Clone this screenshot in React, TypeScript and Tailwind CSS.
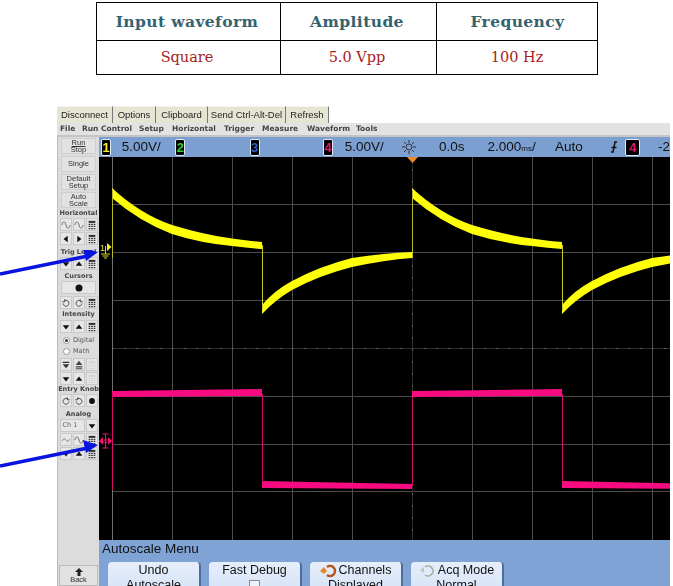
import type { ReactNode } from "react";

type GlyphName =
  | "down"
  | "up"
  | "left"
  | "right"
  | "calc"
  | "calcOff"
  | "waveSmall"
  | "wave"
  | "ccw"
  | "cw"
  | "dot"
  | "fastDown"
  | "fastUp";

function Glyph({ name }: { name: GlyphName }) {
  return (
    <svg width="12" height="12" viewBox="0 0 12 12">
      {name === "down" && <path d="M2 4h8L6 9z" fill="#111" />}
      {name === "up" && <path d="M2 8h8L6 3z" fill="#111" />}
      {name === "left" && <path d="M8 2v8L3 6z" fill="#111" />}
      {name === "right" && <path d="M4 2v8l5-4z" fill="#111" />}
      {name === "fastDown" && <path d="M2 2h8v1.500H2zM2 5h8L6 10z" fill="#333" />}
      {name === "fastUp" && <path d="M6 1l4 5H2zM2 7.500h8V9H2zM2 10h8v1H2z" fill="#444" />}
      {(name === "calc" || name === "calcOff") && (
        <g fill={name === "calc" ? "#333" : "#d4d4d4"}>
          <path d="M2 1h8v2.500H2z" />
          <path d="M2 4.500h2v1.500H2zM5 4.500h2v1.500H5zM8 4.500h2v1.500H8zM2 7h2v1.500H2zM5 7h2v1.500H5zM8 7h2v1.500H8zM2 9.500h2V11H2zM5 9.500h2V11H5zM8 9.500h2V11H8z" />
        </g>
      )}
      {name === "waveSmall" && <path d="M1.500 7c1.500-3 3-3 4.500-1s3 2 4.500-1" fill="none" stroke="#666" />}
      {name === "wave" && <path d="M1 6c1-5 4-5 5 0s4 5 5 0" fill="none" stroke="#555" />}
      {name === "ccw" && <path d="M4 3.500a3.500 3.500 0 1 1-1.500 3M4.500 1.500v3h-3" fill="none" stroke="#333" />}
      {name === "cw" && <path d="M8 3.500a3.500 3.500 0 1 0 1.500 3M7.500 1.500v3h3" fill="none" stroke="#333" />}
      {name === "dot" && <circle cx="6" cy="6" r="3.500" fill="#111" />}
    </svg>
  );
}

function IconRow({ icons, gapTop = "" }: { icons: GlyphName[]; gapTop?: string }) {
  return (
    <div className={`flex justify-center gap-px ${gapTop}`}>
      {icons.map((name, i) => (
        <div
          key={i}
          className="flex h-[13px] w-[12px] items-center justify-center border border-[#c9c9c9] bg-[#e6e6e6]"
        >
          <Glyph name={name} />
        </div>
      ))}
    </div>
  );
}

function SideButton({ children, h = "h-[16px]" }: { children: ReactNode; h?: string }) {
  return (
    <div
      className={`mx-[3px] flex ${h} flex-col items-center justify-center border border-[#cfcfcf] bg-[#e2e2e2] text-[7.5px] leading-[7.5px] text-[#333]`}
    >
      {children}
    </div>
  );
}

function SideLabel({ text, className = "" }: { text: string; className?: string }) {
  return (
    <div className={`text-center font-['DejaVu_Sans',sans-serif] text-[6.5px] font-bold leading-[9px] text-[#444] ${className}`}>
      {text}
    </div>
  );
}

function Radio({ label, on }: { label: string; on?: boolean }) {
  return (
    <div className="flex h-[11px] items-center gap-[3px] pl-[5px] font-['DejaVu_Sans',sans-serif] text-[6.5px] text-[#555]">
      <span className="flex h-[7px] w-[7px] items-center justify-center rounded-full border border-[#999] bg-white">
        {on && <span className="h-[3px] w-[3px] rounded-full bg-[#333]" />}
      </span>
      {label}
    </div>
  );
}

function SidePanel() {
  return (
    <div className="flex h-[449px] w-[42px] shrink-0 flex-col overflow-hidden border-l border-[#bbb] bg-[#dcdcdc] pt-px font-['Liberation_Sans',sans-serif]">
      <SideButton>
        <span className="underline">Run</span>
        <span>Stop</span>
      </SideButton>
      <SideButton h="h-[16px] mt-[2px]">Single</SideButton>
      <SideButton h="h-[16px] mt-[2px]">
        <span>Default</span>
        <span>Setup</span>
      </SideButton>
      <SideButton h="h-[16px] mt-[2px]">
        <span>Auto</span>
        <span>Scale</span>
      </SideButton>
      <SideLabel text="Horizontal" className="mt-[1px]" />
      <IconRow icons={["wave", "wave", "calc"]} />
      <IconRow icons={["left", "right", "calc"]} gapTop="mt-px" />
      <SideLabel text="Trig Level" className="mt-[3px]" />
      <IconRow icons={["down", "up", "calc"]} />
      <SideLabel text="Cursors" className="mt-[2px]" />
      <div className="mx-[3px] flex h-[13px] items-center justify-center border border-[#c9c9c9] bg-[#e6e6e6]">
        <Glyph name="dot" />
      </div>
      <IconRow icons={["ccw", "cw", "calc"]} gapTop="mt-[2px]" />
      <SideLabel text="Intensity" className="mt-[1px]" />
      <IconRow icons={["down", "up", "calc"]} gapTop="mt-px" />
      <div className="mt-[2px]">
        <Radio label="Digital" on />
        <Radio label="Math" />
      </div>
      <IconRow icons={["fastDown", "fastUp", "calcOff"]} gapTop="mt-[1px]" />
      <IconRow icons={["down", "up", "calcOff"]} gapTop="mt-[1px]" />
      <SideLabel text="Entry Knob" />
      <IconRow icons={["cw", "ccw", "dot"]} />
      <SideLabel text="Analog" className="mt-[3px]" />
      <div className="flex justify-center gap-px">
        <div className="flex h-[13px] w-[25px] items-center border border-[#c9c9c9] bg-[#e6e6e6] pl-[2px] font-['DejaVu_Sans',sans-serif] text-[6.5px] text-[#666]">
          Ch 1
        </div>
        <div className="flex h-[13px] w-[12px] items-center justify-center border border-[#c9c9c9] bg-[#e6e6e6]">
          <Glyph name="down" />
        </div>
      </div>
      <IconRow icons={["waveSmall", "wave", "calc"]} gapTop="mt-px" />
      <IconRow icons={["down", "up", "calc"]} gapTop="mt-px" />
      <div className="mt-auto mx-[1px] flex h-[21px] flex-col items-center justify-center border border-[#bbb] bg-[#e2e2e2] text-[7.5px] leading-[7px] text-[#333]">
        <svg width="10" height="8" viewBox="0 0 10 8">
          <path d="M5 0l4 4H6.500v4h-3V4H1z" fill="#222" />
        </svg>
        Back
      </div>
    </div>
  );
}

function ChannelBadge({ n, color, w = "w-[10px]" }: { n: number; color: string; w?: string }) {
  return (
    <span
      className={`flex h-[17px] ${w} items-center justify-center rounded-[2px] border border-[#dfe8f5] bg-black text-[13px] font-bold leading-none ${color}`}
    >
      {n}
    </span>
  );
}

function ChannelBar() {
  return (
    <div className="flex h-[20px] items-center overflow-hidden whitespace-nowrap bg-[#7b9fd1] text-[13.500px] leading-none text-[#111]">
      <div className="ml-[2px] w-[21px]"><ChannelBadge n={1} color="text-[#f2ee30]" /></div>
      <div className="w-[54px]">5.00V/</div>
      <div className="w-[75px]"><ChannelBadge n={2} color="text-[#35d435]" /></div>
      <div className="w-[74px]"><ChannelBadge n={3} color="text-[#2a62c8]" /></div>
      <div className="w-[22px]"><ChannelBadge n={4} color="text-[#e0186c]" /></div>
      <div className="w-[57px]">5.00V/</div>
      <div className="w-[38px]">
        <svg width="16" height="16" viewBox="0 0 16 16" stroke="#333" fill="none">
          <circle cx="8" cy="8" r="3" />
          <path d="M8 1v3M8 12v3M1 8h3M12 8h3M3 3l2 2M11 11l2 2M13 3l-2 2M5 11l-2 2" />
        </svg>
      </div>
      <div className="w-[49px]">0.0s</div>
      <div className="w-[68px]">
        2.000<span className="text-[8px]">ms</span>/
      </div>
      <div className="w-[49px]">Auto</div>
      <div className="flex w-[22px] justify-center">
        <svg width="10" height="14" viewBox="0 0 10 14" fill="none" stroke="#111" strokeWidth="1.500">
          <path d="M8 2H6L4 12H2M2.500 7.500h5" />
        </svg>
      </div>
      <div className="w-[33px]"><ChannelBadge n={4} color="text-[#e0186c]" w="w-[15px]" /></div>
      <div>-2</div>
    </div>
  );
}

function ScopeScreen() {
  const verticals = [172, 232, 292, 352, 472, 532, 592, 652];
  const horizontals = [204, 252, 300, 396, 444, 491];
  return (
    <svg width="571" height="383" viewBox="99 157 571 383" className="block">
      <rect x="99" y="157" width="571" height="383" fill="#000" />
      {verticals.map((x) => (
        <line key={x} x1={x + 0.5} y1="157" x2={x + 0.5} y2="540" stroke="#4c4c4c" />
      ))}
      {horizontals.map((y) => (
        <line key={y} x1="112" y1={y + 0.5} x2="670" y2={y + 0.5} stroke="#4c4c4c" />
      ))}
      <line x1="112" y1="348.500" x2="670" y2="348.500" stroke="#2c2c2c" />
      <line x1="112" y1="348.500" x2="670" y2="348.500" stroke="#5e5e5e" strokeDasharray="2 10" />
      <line x1="412.500" y1="157" x2="412.500" y2="540" stroke="#2c2c2c" />
      <line x1="412.500" y1="157" x2="412.500" y2="540" stroke="#5e5e5e" strokeDasharray="2 10" />
      <line x1="112.500" y1="157" x2="112.500" y2="540" stroke="#707070" />
      <path d="M407 157h11l-5.500 6z" fill="#f08a24" />

      {/* yellow channel, one period drawn twice */}
      {[0, 300].map((dx) => (
        <g key={dx} transform={`translate(${dx} 0)`}>
          <path
            d="M112 188Q140 214 172 225Q205 235 232 238.500Q248 241 262 242L262 249Q248 248 232 246Q200 243 172 234Q140 222 112 198Z"
            fill="#ffff08"
          />
          <path
            d="M262 305Q275 290 292 281Q320 266 352 258Q385 253 412 252L412 258Q385 260 352 267Q320 275 292 290Q275 300 262 314Z"
            fill="#ffff08"
          />
          <path d="M262.500 245V310" stroke="#c8c820" fill="none" />
          <path d="M112.500 190V258" stroke="#b8b820" fill="none" />
        </g>
      ))}

      {/* pink channel */}
      {[0, 300].map((dx) => (
        <g key={dx} transform={`translate(${dx} 0)`}>
          <path d="M112 391L262 389V396L112 397Z" fill="#f80a80" />
          <path d="M262 481L412 484V489L262 488Z" fill="#f80a80" />
          <path d="M262.500 394V484" stroke="#d0106c" fill="none" />
          <path d="M412.500 394V486" stroke="#d0106c" fill="none" />
        </g>
      ))}
      <path d="M112.500 394V490" stroke="#d0106c" fill="none" />

      <g stroke="#d8d430" fill="none">
        <path d="M105.500 246V254M101 254h9M102.500 256h6M104 258h3" />
      </g>
      <text x="100" y="251" fontSize="9" fill="#e8e440" fontFamily="Liberation Sans, sans-serif">1</text>
      <path d="M107 243l4.500 4-4.500 4z" fill="#f2ee30" />

      <g stroke="#f0116e" fill="none">
        <path d="M105.500 434V448M102.500 434h6M102.500 448h6" />
      </g>
      <text x="102.500" y="444" fontSize="9" fill="#f0116e" fontFamily="Liberation Sans, sans-serif">4</text>
      <path d="M108 437l4 4-4 4zM103 437l-4 4 4 4z" fill="#f0116e" />
    </svg>
  );
}

function MenuKey({ top, bottom, icon }: { top: string; bottom?: string; icon?: ReactNode }) {
  return (
    <div className="flex h-[40px] w-[93px] shrink-0 flex-col items-center rounded-t-[4px] border-r-2 border-[#4e6d9c] bg-gradient-to-b from-[#e6eefb] to-[#d0dff6] pt-[1px] text-[12.500px] leading-[15px] text-[#111]">
      <div className="flex items-center gap-[1px] whitespace-nowrap">
        {icon}
        {top}
      </div>
      {bottom ? <div>{bottom}</div> : <div className="mt-[2px] h-[11px] w-[11px] border border-[#889] bg-[#eef3fb]" />}
    </div>
  );
}

function SoftkeyMenu() {
  return (
    <div className="h-[46px] overflow-hidden bg-[#7ea3d4]">
      <div className="pl-[3px] text-[13.500px] leading-[17px] text-[#111]">Autoscale Menu</div>
      <div className="ml-[9px] mt-[5px] flex gap-[8px]">
        <MenuKey top="Undo" bottom="Autoscale" />
        <MenuKey top="Fast Debug" />
        <MenuKey
          top="Channels"
          bottom="Displayed"
          icon={
            <svg width="18" height="14" viewBox="0 0 18 14">
              <path d="M7 3a5 5 0 1 1 0 8" fill="none" stroke="#b4561a" strokeWidth="2.500" />
              <path d="M0 7l4-4 3 4-3 3z" fill="#e08a2a" />
            </svg>
          }
        />
        <MenuKey
          top="Acq Mode"
          bottom="Normal"
          icon={
            <svg width="18" height="14" viewBox="0 0 18 14">
              <path d="M6 3a5 5 0 1 1 0 8" fill="none" stroke="#a5a99a" strokeWidth="1.500" />
              <path d="M1 6l4-3v6z" fill="#c2c5b8" />
            </svg>
          }
        />
      </div>
    </div>
  );
}

export default function App() {
  const topButtons = [
    { label: "Disconnect", w: "w-[56px]" },
    { label: "Options", w: "w-[43px]" },
    { label: "Clipboard", w: "w-[52px]" },
    { label: "Send Ctrl-Alt-Del", w: "w-[78px]" },
    { label: "Refresh", w: "w-[43px]" },
  ];
  const menus = [
    { label: "File", w: "w-[22px]" },
    { label: "Run Control", w: "w-[57px]" },
    { label: "Setup", w: "w-[33px]" },
    { label: "Horizontal", w: "w-[52px]" },
    { label: "Trigger", w: "w-[38px]" },
    { label: "Measure", w: "w-[45px]" },
    { label: "Waveform", w: "w-[49px]" },
    { label: "Tools", w: "w-[40px]" },
  ];

  return (
    <div className="relative h-[586px] w-[673px] overflow-hidden bg-white">
      {/* Table */}
      <div className="ml-[96px] mt-[2px] w-[502px] border-[1.500px] border-black font-['DejaVu_Serif','Liberation_Serif',serif]">
        <div className="grid h-[38px] grid-cols-[184px_156px_1fr] items-center border-b border-black text-center text-[15.500px] font-bold tracking-[0.4px] text-[#35626f]">
          <div className="flex h-full items-center justify-center border-r border-black pr-[3px]">Input waveform</div>
          <div className="flex h-full items-center justify-center border-r border-black pr-[3px]">Amplitude</div>
          <div className="flex h-full items-center justify-center pl-[1px]">Frequency</div>
        </div>
        <div className="grid h-[33px] grid-cols-[184px_156px_1fr] items-center text-center text-[14.500px] text-[#a81c22]">
          <div className="flex h-full items-center justify-center border-r border-black pr-[3px]">Square</div>
          <div className="flex h-full items-center justify-center border-r border-black pr-[3px]">5.0 Vpp</div>
          <div className="flex h-full items-center justify-center">100 Hz</div>
        </div>
      </div>

      {/* Scope screenshot */}
      <div className="ml-[57px] mt-[31px] w-[613px] font-['Liberation_Sans',sans-serif] blur-[0.4px]">
        <div className="flex h-[17px]">
          {topButtons.map((b) => (
            <div
              key={b.label}
              className={`flex ${b.w} items-center justify-center whitespace-nowrap border-r border-[#777] border-t border-t-[#f4f4ea] bg-[#e6e5d3] text-[9.500px] text-[#222]`}
            >
              {b.label}
            </div>
          ))}
        </div>
        <div className="flex h-[14px] items-center whitespace-nowrap border-b-2 border-[#c4c4c4] bg-[#e2e2e2] pl-[3px] font-['DejaVu_Sans',sans-serif] text-[7.5px] font-bold text-[#444]">
          {menus.map((m) => (
            <div key={m.label} className={m.w}>
              {m.label}
            </div>
          ))}
        </div>
        <div className="flex">
          <SidePanel />
          <div className="w-[571px] shrink-0">
            <ChannelBar />
            <ScopeScreen />
            <SoftkeyMenu />
          </div>
        </div>
      </div>

      {/* Annotation arrows */}
      <svg width="110" height="230" viewBox="0 250 110 230" className="absolute left-0 top-[250px]">
        <g stroke="#0a14e0" strokeWidth="3.500" fill="#0a14e0">
          <line x1="0" y1="274" x2="88" y2="256" />
        </g>
        <path d="M83 248L98 252L86 261Z" fill="#0a14e0" />
        <g stroke="#0a14e0" strokeWidth="3.500">
          <line x1="0" y1="466" x2="88" y2="448" />
        </g>
        <path d="M83 440L98 445L86 453Z" fill="#0a14e0" />
      </svg>
    </div>
  );
}
